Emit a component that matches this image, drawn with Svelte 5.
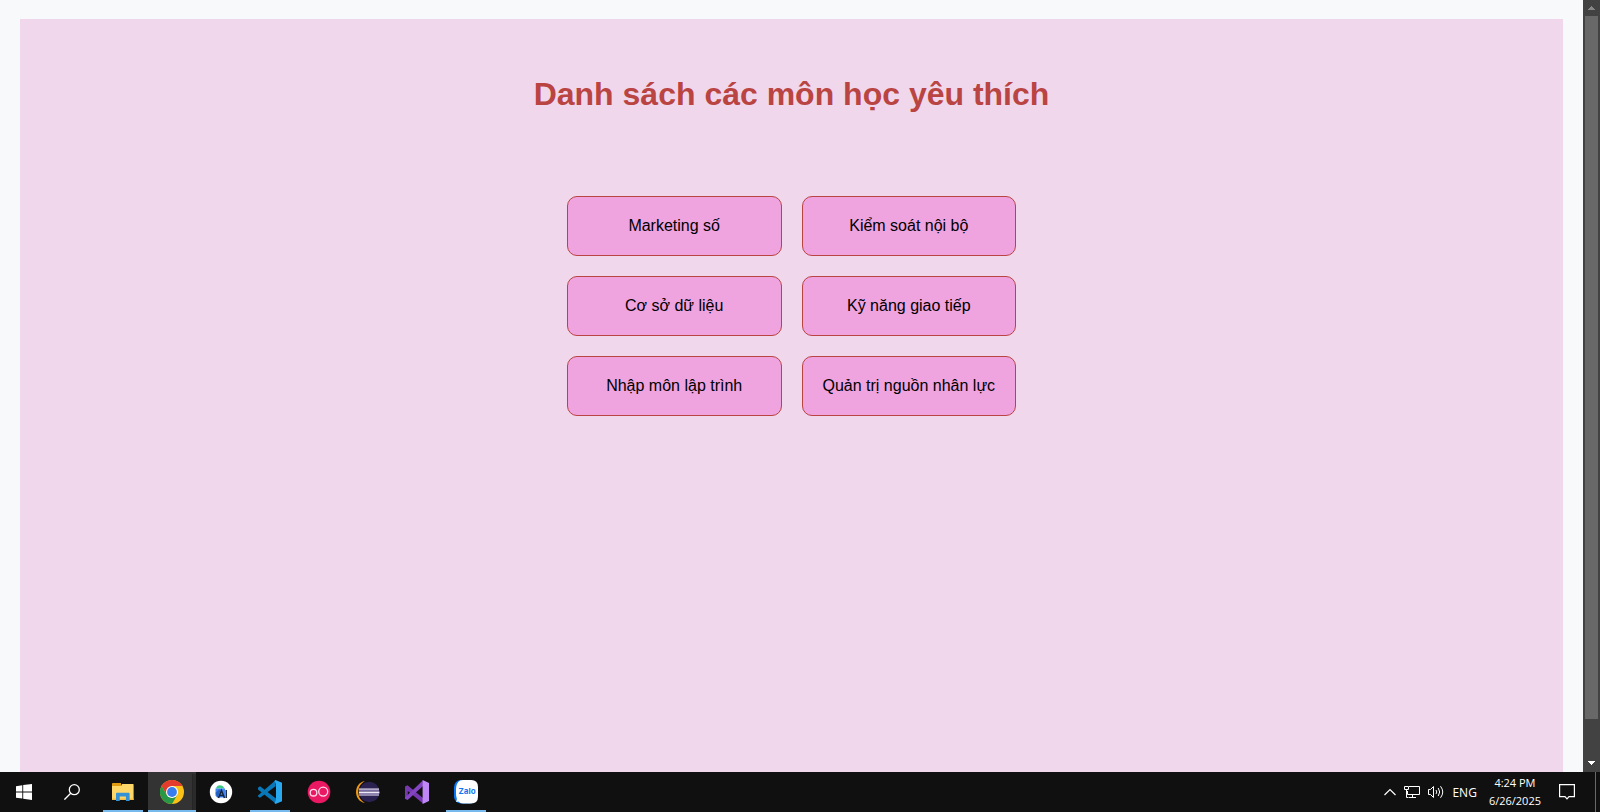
<script>
  const subjects = [
    'Marketing số', 'Kiểm soát nội bộ',
    'Cơ sở dữ liệu', 'Kỹ năng giao tiếp',
    'Nhập môn lập trình', 'Quản trị nguồn nhân lực'
  ];
</script>

<div class="screen">
  <div class="browser">
    <main class="page">
      <section class="panel">
        <h1>Danh sách các môn học yêu thích</h1>
        <div class="grid">
          {#each subjects as subject}
            <div class="card">{subject}</div>
          {/each}
        </div>
      </section>
    </main>
    <div class="scrollbar" aria-hidden="true">
      <svg class="arrow" viewBox="0 0 17 16"><path fill="#868686" d="M8 6h1v1h1v1h1v1h1v1H5V9h1V8h1V7h1z"/></svg>
      <div class="rail"><div class="thumb"></div></div>
      <svg class="arrow" viewBox="0 0 17 16"><path fill="#fff" d="M5 5h7v1h-1v1h-1v1H9v1H8V8H7V7H6V6H5z"/></svg>
    </div>
  </div>

  <footer class="taskbar">
    <button class="system" aria-label="Start">
      <svg width="16" height="16" viewBox="0 0 16 16"><path fill="#fff" d="M0 2.2 6.3 1.3V7.5H0zM7.2 1.1 16 0v7.5H7.2zM0 8.4h6.3v6.2L0 13.7zM7.2 8.4H16V16l-8.8-1.2z"/></svg>
    </button>
    <button class="system" aria-label="Search">
      <svg width="16" height="16" viewBox="0 0 16 16" fill="none" stroke="#fff" stroke-width="1.3"><circle cx="10.3" cy="5.7" r="5"/><path d="M6.7 9.3.4 15.6"/></svg>
    </button>
    <div class="apps">
      <button class="app running" aria-label="File Explorer">
        <svg width="24" height="24" viewBox="0 0 24 24"><path fill="#e09b10" d="M1 3.4q0-.4.4-.4H10v3H1z"/><path fill="#ffd768" d="M1 6h9l1-2h11q.6 0 .6.6V19.4q0 .6-.6.6H1.6q-.6 0-.6-.6z"/><path fill="#f5bd42" d="M1 18.5h21.600V20H1z"/><path fill="#3592d5" d="M5 13.500q0-.8.8-.8h12q.8 0 .8.8V21h-3.700v-4.400H8.700V21H5z"/></svg>
      </button>
      <button class="app running active" aria-label="Google Chrome">
        <svg width="24" height="24" viewBox="0 0 24 24"><circle cx="12" cy="12" r="12" fill="#fbc116"/><path fill="#e33b2e" d="M1.6 6A12 12 0 0 1 22.4 6H12L6.8 15z"/><path fill="#279847" d="M1.6 6A12 12 0 0 0 12 24l5.2-9-5.2 3-5.2-3z"/><circle cx="12" cy="12" r="6" fill="#fff"/><circle cx="12" cy="12" r="4.9" fill="#377df0"/></svg>
      </button>
      <button class="app" aria-label="Android Studio">
        <svg width="24" height="24" viewBox="0 0 24 24"><circle cx="12" cy="12" r="11.200" fill="#fff"/><path fill="#3dcb83" d="M7 8.500C7.500 4 14 4 15.500 8.500z"/><path fill="#4285f4" d="M6.500 8.500h9.500v9h-8l-1.500-2z"/><path fill="#2460bc" d="M6.500 13 10 9.500h2L8.500 17.500z"/><path fill="none" stroke="#13253f" stroke-width="1.500" d="m9.500 18 3-7.500 3 7.500M10.500 15.500h4M17.200 10v8"/></svg>
      </button>
      <button class="app running" aria-label="Visual Studio Code">
        <svg width="24" height="24" viewBox="0 0 24 24"><path fill="#0878b9" d="M0 7.800 2 6.200l16 12.300v5.200L0 9.400z"/><path fill="#0878b9" d="M0 15.600 17.500.3v5.900L2 17.800 0 16.400z"/><path fill="#28a8ef" d="M17.500 0 24 2.800v18.400L17.500 24l-1-1 1.500-3V4l-1.500-3z"/></svg>
      </button>
      <button class="app" aria-label="oO">
        <svg width="24" height="24" viewBox="0 0 24 24"><circle cx="12" cy="12" r="11.3" fill="#ea1862"/><g fill="none" stroke="#ffd9e7" stroke-width="1.300"><circle cx="6.500" cy="12.700" r="3.300"/><circle cx="16.200" cy="11.600" r="4.500"/></g></svg>
      </button>
      <button class="app" aria-label="Eclipse">
        <svg width="24" height="24" viewBox="0 0 24 24"><path fill="#ef9818" d="M9 1C-3 3-3 21 9 23 0 18 0 6 9 1z"/><circle cx="13.300" cy="12" r="10.200" fill="#2b2252"/><path fill="#eee9f6" d="M3 8.500h20v1.200H3zm0 3h20.400v2H3zm0 3h20v1H3z"/><path fill="#9682bf" d="M3 9.700h20v1H3zm0 3.800h20v1H3z"/></svg>
      </button>
      <button class="app" aria-label="Visual Studio">
        <svg width="24" height="24" viewBox="0 0 24 24"><path fill="#7638af" d="M0 6.500 2.500 5.200 18 18v5.600L2.800 11v6.500L0 18.800z"/><path fill="#8445c4" d="M0 17.500 17.800.4 18 6 2.600 20 0 18.800z"/><path fill="#bf87f5" d="m17.600 0 6.400 3v18l-6.400 3z"/></svg>
      </button>
      <button class="app running" aria-label="Zalo">
        <svg width="24" height="24" viewBox="0 0 24 24"><rect width="23" height="23.500" rx="7" fill="#0878f7"/><path fill="#fff" d="M9 0h8q7 0 7 7v9.500q0 7-7 7H9q-3 0-4.600-2-1.400.7-2.500-.1 1.300-1.200.9-3Q2 17 2 13.500V9Q2 3 6 .4z"/><text x="4.500" y="14" font-family="Inter, sans-serif" font-size="8" font-weight="700" fill="#1677f2">Zalo</text></svg>
      </button>
    </div>

    <div class="tray">
      <button aria-label="Show hidden icons"><svg width="12" height="16" viewBox="0 0 12 16" fill="none" stroke="#fff" stroke-width="1.200"><path d="m.5 11 5.500-5.500L11.500 11"/></svg></button>
      <button aria-label="Network"><svg width="16" height="16" viewBox="0 0 16 16" fill="none" stroke="#fff"><path d="M5 2.500h10.500v8h-12V7M8.500 10.500v3M5 13.500h7M.500 2.500h4v3h-4zM2.500 5.500v8h2"/></svg></button>
      <button aria-label="Volume"><svg width="16" height="16" viewBox="0 0 16 16" fill="none" stroke="#fff"><path d="M.5 5.500h2l3-3v11l-3-3h-2zM8 6q1.600 2 0 4M10.200 4q3 4 0 8M12.500 2.200q4.500 5.800 0 11.600"/></svg></button>
      <button>ENG</button>
      <button class="clock"><span>4:24 PM</span><span>6/26/2025</span></button>
      <button class="notice" aria-label="Notifications"><svg width="16" height="16" viewBox="0 0 16 16" fill="none" stroke="#fff" stroke-width="1.200"><path d="M.6.6h14.800v12H10L8 14.800 6 12.600H.6z"/></svg></button>
      <button class="desktop" aria-label="Show desktop"></button>
    </div>
  </footer>
</div>

<style>
  :global(body) { margin: 0; }
  .screen {
    display: flex;
    flex-direction: column;
    height: 100vh;
    overflow: hidden;
    font-family: "Liberation Sans", Arial, sans-serif;
  }
  .browser { display: flex; flex: 1; min-height: 0; }
  .page {
    flex: 1;
    display: flex;
    padding: 19px 20px 0;
    background: #f8f9fb;
  }
  .panel {
    flex: 1;
    display: flex;
    flex-direction: column;
    align-items: center;
    padding-top: 57px;
    background: #f0d7ec;
  }
  h1 {
    margin: 0 0 83px;
    color: #b94442;
    font-size: 32px;
    line-height: 37px;
  }
  .grid { display: grid; grid-template-columns: 1fr 1fr; gap: 20px; }
  .card {
    padding: 20px;
    border: 1px solid #b94442;
    border-radius: 10px;
    background: #efa3df;
    color: #000;
    font-size: 16px;
    line-height: 18px;
    text-align: center;
  }
  .scrollbar {
    display: flex;
    flex-direction: column;
    width: 17px;
    background: #424242;
  }
  .arrow { display: block; width: 17px; height: 16px; }
  .rail { flex: 1; padding: 0 2px; }
  .thumb { height: 95%; background: #686868; }
  .taskbar {
    display: flex;
    height: 40px;
    background: #101010;
    color: #fff;
  }
  button {
    display: flex;
    align-items: center;
    justify-content: center;
    margin: 0;
    padding: 0;
    border: 0;
    background: none;
    color: inherit;
    font-family: "Open Sans", "Noto Sans", sans-serif;
    font-size: 12px;
  }
  button svg { display: block; }
  .system { width: 48px; }
  .apps { display: flex; gap: 9px; margin-left: 7px; }
  .app {
    box-sizing: border-box;
    width: 40px;
    border-top: 2px solid transparent;
    border-bottom: 2px solid transparent;
  }
  .running { border-bottom-color: #76b9ed; }
  .active {
    width: 48px;
    margin: 0 -4px;
    border-top-color: #333;
    background: linear-gradient(90deg, #333 44px, #202020 44px, #2b2b2b 45px);
  }
  .tray { display: flex; gap: 8px; margin-left: auto; }
  .clock {
    flex-direction: column;
    margin: 0 10px 0 4px;
    font-size: 11px;
    line-height: 18px;
  }
  .notice { margin-right: 12px; }
  .desktop {
    width: 5px;
    border-left: 1px solid #686868;
  }
</style>
